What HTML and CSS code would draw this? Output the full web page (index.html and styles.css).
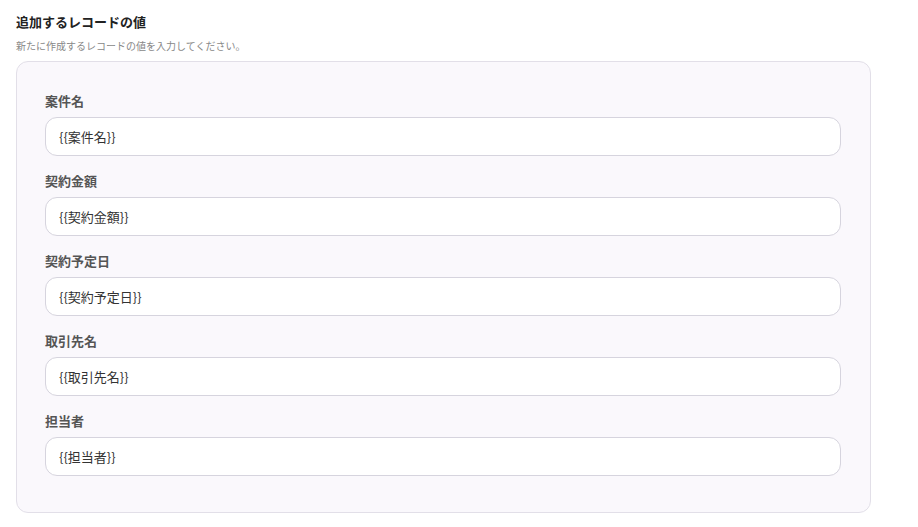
FILE: index.html
```html
<!DOCTYPE html>
<html lang="ja">

<head>
  <meta charset="UTF-8">
  <meta name="viewport" content="width=device-width, initial-scale=1">
  <title>追加するレコードの値</title>
  <link rel="stylesheet" href="styles.css">
</head>

<body>

  <h2 class="title">追加するレコードの値</h2>
  <p class="description">新たに作成するレコードの値を入力してください。</p>

  <div class="panel">
    <div class="field">
      <label>案件名</label>
      <div class="input">{{案件名}}</div>
    </div>
    <div class="field">
      <label>契約金額</label>
      <div class="input">{{契約金額}}</div>
    </div>
    <div class="field">
      <label>契約予定日</label>
      <div class="input">{{契約予定日}}</div>
    </div>
    <div class="field">
      <label>取引先名</label>
      <div class="input">{{取引先名}}</div>
    </div>
    <div class="field">
      <label>担当者</label>
      <div class="input">{{担当者}}</div>
    </div>
  </div>

</body>

</html>
```

FILE: styles.css
```css
* {
  box-sizing: border-box;
  margin: 0;
  padding: 0;
}

body {
  font-family: "Noto Sans CJK JP", "Noto Sans", sans-serif;
  background: #fff;
  color: #333;
  padding: 12px 47px 0 16px;
}

.title {
  font-size: 13px;
  font-weight: 700;
  line-height: 20px;
  color: #222;
}

.description {
  margin-top: 7px;
  font-size: 10px;
  line-height: 14px;
  color: #888;
}

.panel {
  margin-top: 8px;
  background: #faf8fc;
  border: 1px solid #e2dfe8;
  border-radius: 12px;
  padding: 29px 29px 36px 28px;
  display: flex;
  flex-direction: column;
  gap: 15px;
}

.field {
  display: flex;
  flex-direction: column;
  gap: 6px;
}

.field label {
  font-size: 13px;
  font-weight: 700;
  line-height: 20px;
  color: #555;
}

.input {
  height: 39px;
  background: #fff;
  border: 1px solid #d6d4de;
  border-radius: 12px;
  padding: 0 13px;
  display: flex;
  align-items: center;
  font-size: 13px;
  color: #333;
}
```
